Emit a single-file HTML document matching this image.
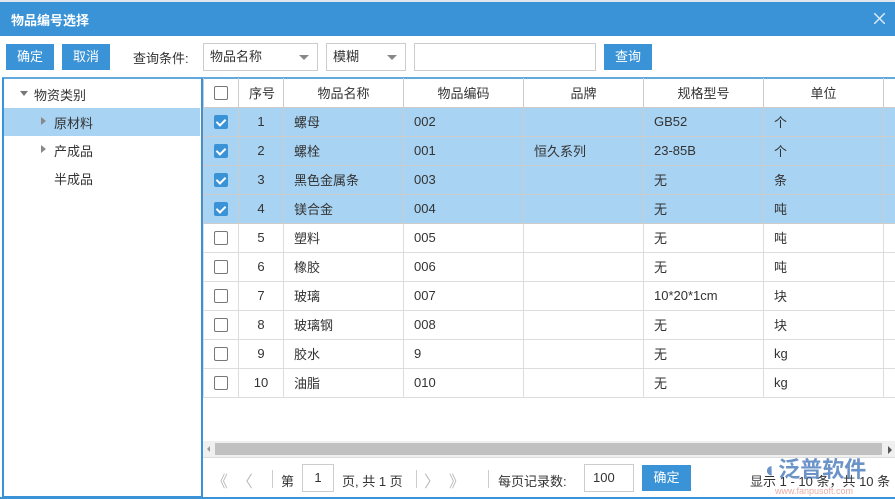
<!DOCTYPE html><html><head><meta charset="utf-8"><style>
*{box-sizing:border-box;margin:0;padding:0}
body{width:895px;height:499px;overflow:hidden;background:#fff;font-family:"Liberation Sans","Noto Sans CJK SC",sans-serif;font-size:13px;color:#333;position:relative}
.abs{position:absolute}
.title{left:0;top:0;width:895px;height:36px;background:#3a93d7;border-top:2px solid #dfe6ee}
.title span{position:absolute;left:11px;top:8px;color:#fff;font-weight:bold;font-size:13px}
.btn{background:#3a93d7;color:#fff;text-align:center;line-height:26px;height:26px;font-size:13px}
.sel{border:1px solid #ccc;height:28px;line-height:26px;padding-left:6px;background:#fff}
.sel i{position:absolute;right:8px;top:11px;border-left:5px solid transparent;border-right:5px solid transparent;border-top:5px solid #888}
.wrap{position:absolute;left:203px;top:78px;width:692px;height:330px;overflow:hidden}
table{border-collapse:collapse;table-layout:fixed;width:700px}
td{border:1px solid #ddd;height:29px;padding:0 10px;white-space:nowrap;overflow:hidden}
tr.h td{text-align:center;border-color:#ccc;border-top:0}
tr.s td{background:#a8d3f2;border-color:#ccc}
.c{text-align:center;padding:0}
.cb{display:inline-block;width:14px;height:14px;border:1px solid #777;border-radius:2px;vertical-align:middle;background:#fff}
.cb.on{background:#3a93d7;border-color:#3a93d7;position:relative}
.cb.on:after{content:"";position:absolute;left:3px;top:1px;width:4px;height:7px;border:solid #fff;border-width:0 2px 2px 0;transform:rotate(45deg)}
.pg{color:#333;font-size:13px}
</style></head><body>
<div class="abs title"><span>物品编号选择</span></div>
<svg class="abs" style="left:874px;top:13px" width="11" height="11"><path d="M0 0L11 11M11 0L0 11" stroke="#dbe9f6" stroke-width="1.5"/></svg>
<div class="abs btn" style="left:6px;top:44px;width:48px">确定</div>
<div class="abs btn" style="left:62px;top:44px;width:48px">取消</div>
<div class="abs" style="left:133px;top:48px">查询条件:</div>
<div class="abs sel" style="left:203px;top:43px;width:115px">物品名称<i></i></div>
<div class="abs sel" style="left:326px;top:43px;width:80px">模糊<i></i></div>
<div class="abs sel" style="left:414px;top:43px;width:182px"></div>
<div class="abs btn" style="left:604px;top:44px;width:48px">查询</div>
<div class="abs" style="left:2px;top:77px;width:893px;height:2px;background:#3a93d7;opacity:.8"></div>
<div class="abs" style="left:2px;top:78px;width:201px;height:420px;border:2px solid #3a93d7;border-top:0"></div>
<div class="abs" style="left:4px;top:108px;width:196px;height:28px;background:#a8d3f2"></div>
<div class="abs" style="left:20px;top:91px;border-left:4px solid transparent;border-right:4px solid transparent;border-top:5px solid #777"></div>
<div class="abs" style="left:34px;top:85px">物资类别</div>
<div class="abs" style="left:41px;top:117px;border-top:4px solid transparent;border-bottom:4px solid transparent;border-left:5px solid #888"></div>
<div class="abs" style="left:54px;top:113px">原材料</div>
<div class="abs" style="left:41px;top:145px;border-top:4px solid transparent;border-bottom:4px solid transparent;border-left:5px solid #888"></div>
<div class="abs" style="left:54px;top:141px">产成品</div>
<div class="abs" style="left:54px;top:169px">半成品</div>
<div class="wrap"><table>
<colgroup><col style="width:35px"><col style="width:45px"><col style="width:120px"><col style="width:120px"><col style="width:120px"><col style="width:120px"><col style="width:120px"><col style="width:20px"></colgroup>
<tr class="h"><td class="c"><span class="cb"></span></td><td>序号</td><td>物品名称</td><td>物品编码</td><td>品牌</td><td>规格型号</td><td>单位</td><td></td></tr>
<tr class="s"><td class="c"><span class="cb on"></span></td><td class="c">1</td><td>螺母</td><td>002</td><td></td><td>GB52</td><td>个</td><td></td></tr>
<tr class="s"><td class="c"><span class="cb on"></span></td><td class="c">2</td><td>螺栓</td><td>001</td><td>恒久系列</td><td>23-85B</td><td>个</td><td></td></tr>
<tr class="s"><td class="c"><span class="cb on"></span></td><td class="c">3</td><td>黑色金属条</td><td>003</td><td></td><td>无</td><td>条</td><td></td></tr>
<tr class="s"><td class="c"><span class="cb on"></span></td><td class="c">4</td><td>镁合金</td><td>004</td><td></td><td>无</td><td>吨</td><td></td></tr>
<tr><td class="c"><span class="cb"></span></td><td class="c">5</td><td>塑料</td><td>005</td><td></td><td>无</td><td>吨</td><td></td></tr>
<tr><td class="c"><span class="cb"></span></td><td class="c">6</td><td>橡胶</td><td>006</td><td></td><td>无</td><td>吨</td><td></td></tr>
<tr><td class="c"><span class="cb"></span></td><td class="c">7</td><td>玻璃</td><td>007</td><td></td><td>10*20*1cm</td><td>块</td><td></td></tr>
<tr><td class="c"><span class="cb"></span></td><td class="c">8</td><td>玻璃钢</td><td>008</td><td></td><td>无</td><td>块</td><td></td></tr>
<tr><td class="c"><span class="cb"></span></td><td class="c">9</td><td>胶水</td><td>9</td><td></td><td>无</td><td>kg</td><td></td></tr>
<tr><td class="c"><span class="cb"></span></td><td class="c">10</td><td>油脂</td><td>010</td><td></td><td>无</td><td>kg</td><td></td></tr>
</table></div>
<div class="abs" style="left:203px;top:441px;width:692px;height:16px;background:#f0f0f0"></div>
<div class="abs" style="left:215px;top:443px;width:667px;height:12px;background:#c1c1c1"></div>
<div class="abs" style="left:207px;top:446px;border-top:3px solid transparent;border-bottom:3px solid transparent;border-right:3px solid #999"></div>
<div class="abs" style="left:888px;top:446px;border-top:4px solid transparent;border-bottom:4px solid transparent;border-left:4px solid #555"></div>
<div class="abs" style="left:203px;top:457px;width:692px;height:1px;background:#ddd"></div>
<div class="abs" style="left:0;top:497px;width:895px;height:2px;background:#3a93d7"></div>
<div class="abs pg" style="left:212px;top:468px;color:#bbb;font-size:16px">《 &nbsp;〈</div>
<div class="abs" style="left:272px;top:470px;width:1px;height:18px;background:#ccc"></div>
<div class="abs pg" style="left:281px;top:471px">第</div>
<div class="abs" style="left:302px;top:464px;width:32px;height:28px;border:1px solid #ccc;text-align:center;line-height:26px">1</div>
<div class="abs pg" style="left:342px;top:471px">页, 共 1 页</div>
<div class="abs" style="left:416px;top:470px;width:1px;height:18px;background:#ccc"></div>
<div class="abs pg" style="left:424px;top:468px;color:#bbb;font-size:16px">〉 &nbsp;》</div>
<div class="abs" style="left:488px;top:470px;width:1px;height:18px;background:#ccc"></div>
<div class="abs pg" style="left:498px;top:471px">每页记录数:</div>
<div class="abs" style="left:584px;top:464px;width:50px;height:28px;border:1px solid #ccc;line-height:26px;padding-left:8px">100</div>
<div class="abs btn" style="left:642px;top:465px;width:49px;height:26px">确定</div>
<div class="abs pg" style="left:750px;top:471px">显示 1 - 10 条，共 10 条</div>
<div class="abs" style="left:765px;top:452px;color:#3a6fb5;font-size:22px;font-weight:bold;opacity:.75">◐泛普软件</div>
<div class="abs" style="left:775px;top:486px;color:#e08a80;font-size:9px;opacity:.7">www.fanpusoft.com</div>
</body></html>
